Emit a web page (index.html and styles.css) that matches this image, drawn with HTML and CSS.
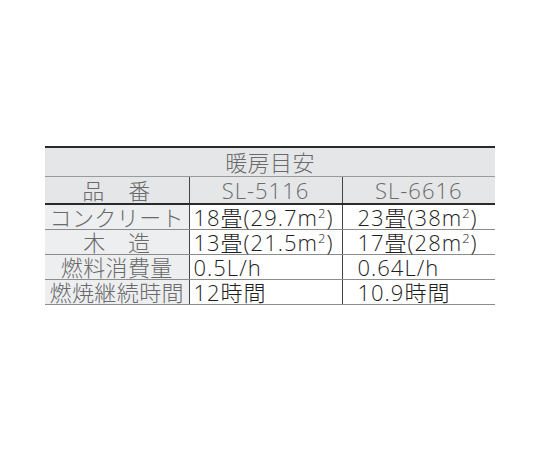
FILE: index.html
```html
<!DOCTYPE html>
<html lang="ja">
<head>
<meta charset="utf-8">
<link rel="stylesheet" href="styles.css">
</head>
<body>
<div class="page">
<table class="spec">
  <colgroup><col class="c1"><col class="c2"><col class="c3"></colgroup>
  <tr class="title"><th colspan="3">暖房目安</th></tr>
  <tr class="head"><th>品　番</th><th>SL-5116</th><th>SL-6616</th></tr>
  <tr><th>コンクリート</th><td class="v2">18畳(29.7m<sup>2</sup>)</td><td class="v3">23畳(38m<sup>2</sup>)</td></tr>
  <tr><th>木　造</th><td class="v2">13畳(21.5m<sup>2</sup>)</td><td class="v3">17畳(28m<sup>2</sup>)</td></tr>
  <tr><th>燃料消費量</th><td class="v2">0.5L/h</td><td class="v3">0.64L/h</td></tr>
  <tr><th>燃焼継続時間</th><td class="v2">12時間</td><td class="v3">10.9時間</td></tr>
</table>
</div>
</body>
</html>
```

FILE: styles.css
```css
html, body {
  margin: 0;
  padding: 0;
  background: #ffffff;
}
.page {
  width: 540px;
  height: 450px;
  padding: 146px 0 0 45px;
  box-sizing: border-box;
}
.spec {
  width: 450px;
  border-collapse: collapse;
  table-layout: fixed;
  font-family: "Open Sans", "Noto Sans CJK JP", sans-serif;
  font-weight: 300;
  font-size: 22px;
  border-top: 2px solid #2a2a2a;
}
.c1 { width: 144px; }
.c2 { width: 153px; }
.c3 { width: 153px; }
.spec th, .spec td {
  padding: 0;
  line-height: 24px;
  white-space: nowrap;
  overflow: visible;
  border-bottom: 1px solid #8c8c8c;
}
.spec th {
  font-weight: 300;
  color: #6a6a6a;
  background: #eceef0;
  text-align: center;
  letter-spacing: 0.4px;
  border-right: 1px solid #444;
}
.spec tr.title th {
  background: #e4e6e8;
  height: 28px;
  border-right: none;
  border-bottom: 1px solid #9a9a9a;
}
.spec tr.head th {
  background: #e4e6e8;
  height: 26px;
  border-bottom: 2px solid #2a2a2a;
  letter-spacing: 1px;
}
.spec tr.head th:last-child { border-right: none; }
.spec td {
  color: #1e1e1e;
  height: 24px;
  text-align: left;
  letter-spacing: 1px;
}
.spec td.v2 {
  padding-left: 4px;
  border-right: 1px solid #444;
}
.spec td.v3 {
  padding-left: 15px;
}
.spec sup {
  font-size: 13px;
  line-height: 0;
  vertical-align: 8px;
}
```
